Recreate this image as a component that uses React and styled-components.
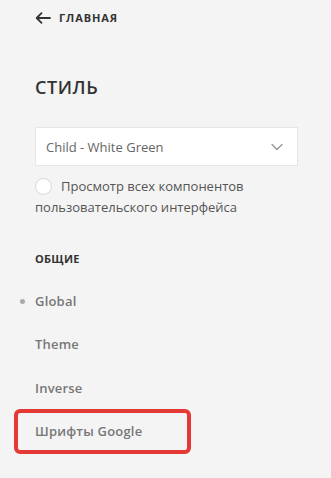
import styled, { createGlobalStyle } from "styled-components";

const GlobalStyle = createGlobalStyle`
  html, body {
    margin: 0;
    padding: 0;
    background: #f4f4f4;
  }
  body {
    font-family: "Open Sans", "Noto Sans", sans-serif;
  }
`;

const Panel = styled.div`
  width: 331px;
  height: 478px;
  box-sizing: border-box;
  padding: 8px 33px 0 35px;
  background: #f4f4f4;
  display: flex;
  flex-direction: column;
`;

const BackLink = styled.a`
  display: flex;
  align-items: center;
  gap: 8px;
  height: 19px;
  color: #333;
  font-size: 11px;
  font-weight: 700;
  letter-spacing: 0.9px;
  text-decoration: none;
`;

const Title = styled.h2`
  margin: 47px 0 0;
  font-size: 18px;
  line-height: 26px;
  font-weight: 600;
  color: #333;
  letter-spacing: 0.6px;
`;

const Select = styled.div`
  margin-top: 27px;
  height: 39px;
  box-sizing: border-box;
  background: #fff;
  border: 1px solid #e6e6e6;
  display: flex;
  align-items: center;
  justify-content: space-between;
  padding: 0 14px 0 10px;
  font-size: 13px;
  color: #666;
`;

const Radio = styled.span`
  display: inline-block;
  width: 17px;
  height: 17px;
  box-sizing: border-box;
  border: 1px solid #d6d6d6;
  border-radius: 50%;
  background: #fff;
  vertical-align: -4px;
  margin-right: 9px;
`;

const CheckText = styled.p`
  margin: 10px 0 0;
  font-size: 13px;
  line-height: 21px;
  color: #555;
`;

const SectionLabel = styled.div`
  margin-top: 33px;
  font-size: 11px;
  font-weight: 700;
  color: #333;
  line-height: 16px;
  letter-spacing: 0.3px;
`;

const Nav = styled.ul`
  list-style: none;
  margin: 12px 0 0;
  padding: 0;
  display: flex;
  flex-direction: column;
`;

const NavItem = styled.li`
  position: relative;
  height: 43.5px;
  display: flex;
  align-items: center;
  font-size: 13px;
  font-weight: 600;
  color: #777;
  letter-spacing: 0.2px;
  &::before {
    content: "";
    display: ${(p) => (p.$active ? "block" : "none")};
    position: absolute;
    left: -15px;
    top: 50%;
    width: 5px;
    height: 5px;
    margin-top: -2px;
    border-radius: 50%;
    background: #aaa;
  }
`;

const Highlight = styled.span`
  position: absolute;
  left: -21px;
  top: -1px;
  width: 177px;
  height: 45px;
  box-sizing: border-box;
  border: 4px solid #e53935;
  border-radius: 6px;
  pointer-events: none;
`;

const items = [
  { label: "Global", active: true },
  { label: "Theme" },
  { label: "Inverse" },
  { label: "Шрифты Google", marked: true },
];

export default function App() {
  return (
    <>
      <GlobalStyle />
      <Panel>
        <BackLink href="#">
          <svg width="16" height="12" viewBox="0 0 16 12" fill="none">
            <path
              d="M15 6H2M6.5 1.2L1.7 6l4.8 4.8"
              stroke="#333"
              strokeWidth="1.8"
              strokeLinecap="round"
              strokeLinejoin="round"
            />
          </svg>
          ГЛАВНАЯ
        </BackLink>
        <Title>СТИЛЬ</Title>
        <Select>
          <span>Child - White Green</span>
          <svg width="12" height="8" viewBox="0 0 12 8" fill="none">
            <path
              d="M1 1.5l5 5 5-5"
              stroke="#999"
              strokeWidth="1.4"
              strokeLinecap="round"
              strokeLinejoin="round"
            />
          </svg>
        </Select>
        <CheckText>
          <Radio />
          Просмотр всех компонентов пользовательского интерфейса
        </CheckText>
        <SectionLabel>ОБЩИЕ</SectionLabel>
        <Nav>
          {items.map((it) => (
            <NavItem key={it.label} $active={it.active}>
              {it.label}
              {it.marked && <Highlight />}
            </NavItem>
          ))}
        </Nav>
      </Panel>
    </>
  );
}
